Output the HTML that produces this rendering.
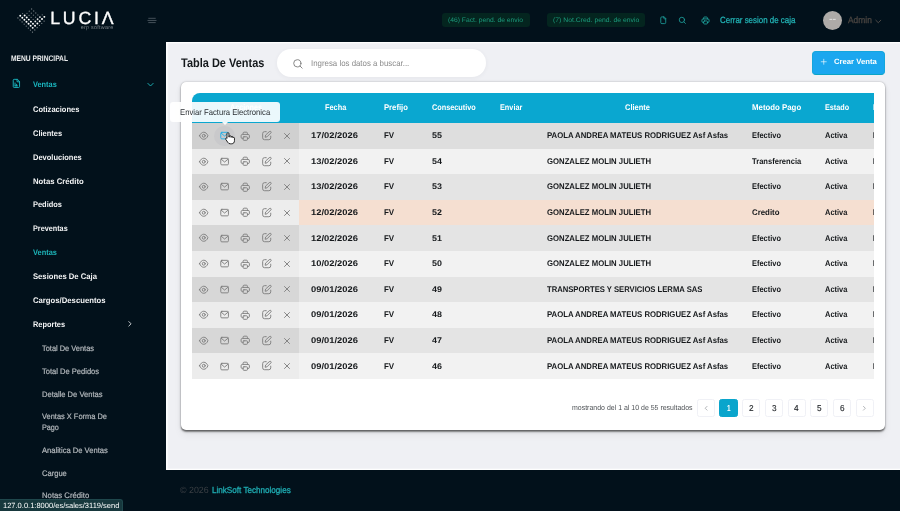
<!DOCTYPE html>
<html lang="es"><head><meta charset="utf-8"><title>Tabla De Ventas</title>
<style>
*{box-sizing:border-box;margin:0;padding:0}
html,body{width:900px;height:511px;overflow:hidden;background:#02111b;font-family:"Liberation Sans",sans-serif}
body{position:relative}
.t{position:absolute;white-space:nowrap;display:block;text-decoration:none;font-style:normal;transform-origin:0 50%;text-rendering:geometricPrecision}
.ic{position:absolute;display:block;overflow:visible}
ul,li{list-style:none}
aside,header,main,footer,.status{will-change:transform}
aside{position:absolute;left:0;top:0;width:166px;height:511px;background:#02111b;overflow:hidden}
header{position:absolute;left:166px;top:0;width:734px;height:42px;background:#02111b}
main{position:absolute;left:166px;top:41.6px;width:734px;height:428.1px;background:#eff0f4;box-shadow:inset 2.200px 0 1.200px -0.400px rgba(255,255,255,.9),inset 0 1.700px 0.800px -0.400px rgba(255,255,255,.95),inset 0 -1.700px 0.800px -0.400px rgba(255,255,255,.95)}
footer{position:absolute;left:166px;top:469.7px;width:734px;height:41.3px;background:#02111b}
.badge{position:absolute;background:#04251f;border-radius:3px}
.avatar{position:absolute;width:19.4px;height:19.4px;border-radius:50%;background:#aeaba8}
.search{position:absolute;background:#fff;border-radius:14px;box-shadow:0 1px 4px rgba(60,60,90,.06)}
.btn{position:absolute;display:block;background:#1ba7ef;border-radius:4px;border:1px solid #14a6dc;border-bottom:1.300px solid #0ba4c6}
.card{position:absolute;background:#fff;border-radius:5px;box-shadow:0 2px 1.700px rgba(0,0,0,.38),0 .500px 1.500px rgba(0,0,0,.30),0 1px 4px rgba(0,0,0,.10),0 5px 9px rgba(0,0,0,.05)}
table{position:absolute;display:block;overflow:hidden;background:#f4f1ef;border-top-left-radius:8px;border-collapse:collapse}
thead,tbody{display:block}
tr{display:block;position:absolute;left:0;width:800px}
th,td{display:block;position:absolute;top:0;font-weight:normal;text-align:left}
thead tr{background:#0aa7d0}
tr.odd td{background:#e4e4e4}
tr.odd td.act{background:#d7d7d7}
tr.hover td{background:#dedede}
tr.hover td.act{background:#d0d0d0}
tr.even td{background:#f2f2f2}
tr.even td.act{background:#ececec}
tr.warn td{background:#f5dfd1}
tr.warn td.act{background:#ededed}
td a{display:block}
.hov{position:absolute;display:block;width:20.5px;height:20.5px;border-radius:50%;background:#c9c9cb}
.pg{position:absolute;display:block;width:18.2px;height:18.4px;border-radius:2.500px;background:#fff;border:1px solid #f0f1f6}
.pg.on{background:#0aa5cc;border-color:#0aa5cc}
.tip{position:absolute;background:rgba(255,255,255,.92);border-radius:3px}
.arrow{position:absolute;display:block;width:0;height:0;border-left:3px solid transparent;border-right:3px solid transparent;border-top:3.200px solid rgba(255,255,255,.92)}
.status{position:absolute;left:0;top:498.8px;width:122.8px;height:12.2px;background:#17383d;border-top:1px solid #1f474c;border-right:1px solid #1f474c;border-top-right-radius:3px}
</style></head>
<body>
<aside>
<div class="brand">
<svg class="ic" style="left:0;top:0;width:60px;height:42px" viewBox="0 0 60 42" fill="#fff"><circle cx="17.93" cy="17.95" r="0.62" fill-opacity="0.55"/><circle cx="20.25" cy="15.75" r="0.98" fill-opacity="1.0"/><circle cx="22.57" cy="13.55" r="0.66" fill-opacity="0.42"/><circle cx="20.01" cy="19.97" r="0.62" fill-opacity="0.55"/><circle cx="22.33" cy="17.77" r="0.98" fill-opacity="1.0"/><circle cx="24.65" cy="15.57" r="0.98" fill-opacity="1.0"/><circle cx="26.97" cy="13.37" r="0.66" fill-opacity="0.42"/><circle cx="29.29" cy="11.17" r="0.66" fill-opacity="0.42"/><circle cx="31.61" cy="8.97" r="0.66" fill-opacity="0.42"/><circle cx="22.09" cy="21.99" r="0.62" fill-opacity="0.55"/><circle cx="24.41" cy="19.79" r="0.98" fill-opacity="1.0"/><circle cx="26.73" cy="17.59" r="0.98" fill-opacity="1.0"/><circle cx="29.05" cy="15.39" r="0.66" fill-opacity="0.42"/><circle cx="31.37" cy="13.19" r="0.66" fill-opacity="0.42"/><circle cx="33.69" cy="10.99" r="0.66" fill-opacity="0.42"/><circle cx="24.17" cy="24.01" r="0.62" fill-opacity="0.55"/><circle cx="26.49" cy="21.81" r="0.98" fill-opacity="1.0"/><circle cx="28.81" cy="19.61" r="0.98" fill-opacity="1.0"/><circle cx="31.13" cy="17.41" r="0.66" fill-opacity="0.42"/><circle cx="33.45" cy="15.21" r="0.66" fill-opacity="0.42"/><circle cx="35.77" cy="13.01" r="0.66" fill-opacity="0.42"/><circle cx="26.25" cy="26.03" r="0.62" fill-opacity="0.55"/><circle cx="28.57" cy="23.83" r="0.98" fill-opacity="1.0"/><circle cx="30.89" cy="21.63" r="0.98" fill-opacity="1.0"/><circle cx="33.21" cy="19.43" r="0.66" fill-opacity="0.42"/><circle cx="35.53" cy="17.23" r="0.66" fill-opacity="0.42"/><circle cx="37.85" cy="15.03" r="0.66" fill-opacity="0.42"/><circle cx="28.33" cy="28.05" r="0.62" fill-opacity="0.55"/><circle cx="30.65" cy="25.85" r="0.98" fill-opacity="1.0"/><circle cx="32.97" cy="23.65" r="0.98" fill-opacity="1.0"/><circle cx="35.29" cy="21.45" r="0.9" fill-opacity="0.88"/><circle cx="37.61" cy="19.25" r="0.9" fill-opacity="0.88"/><circle cx="39.93" cy="17.05" r="0.9" fill-opacity="0.88"/><circle cx="42.25" cy="14.85" r="0.66" fill-opacity="0.42"/><circle cx="30.41" cy="30.07" r="0.62" fill-opacity="0.55"/><circle cx="32.73" cy="27.87" r="0.98" fill-opacity="1.0"/><circle cx="35.05" cy="25.67" r="0.98" fill-opacity="1.0"/><circle cx="37.37" cy="23.47" r="0.98" fill-opacity="1.0"/><circle cx="39.69" cy="21.27" r="0.98" fill-opacity="1.0"/><circle cx="42.01" cy="19.07" r="0.98" fill-opacity="1.0"/><circle cx="44.33" cy="16.87" r="0.98" fill-opacity="1.0"/><circle cx="32.49" cy="32.09" r="0.62" fill-opacity="0.55"/><circle cx="34.81" cy="29.89" r="0.62" fill-opacity="0.55"/><circle cx="37.13" cy="27.69" r="0.62" fill-opacity="0.55"/><circle cx="39.45" cy="25.49" r="0.62" fill-opacity="0.55"/><circle cx="41.77" cy="23.29" r="0.62" fill-opacity="0.55"/><circle cx="44.09" cy="21.09" r="0.62" fill-opacity="0.55"/></svg>
<span class="t logo" style="left:50.20px;top:5.86px;font-size:17.7px;line-height:24.78px;font-weight:400;color:#fdfdfd;letter-spacing:2.819px;-webkit-text-stroke:0.35px #fdfdfd;">LUCI&Lambda;</span>
<span class="t" style="left:80.80px;top:25.42px;font-size:5.4px;line-height:7.56px;font-weight:400;color:#7a8187;letter-spacing:0.257px;">erp software</span>
<svg class="ic" style="left:146px;top:15px;width:12px;height:10px" viewBox="0 0 12 10" fill="none" stroke="#515c66" stroke-width="0.850" stroke-linecap="round"><path d="M2.700 3.300h6.600M1.900 5.450h8.200M2.700 7.600h6.600"/></svg>
<h6 class="t" style="left:11.40px;top:53.40px;font-size:8px;line-height:11.2px;font-weight:700;color:#eceeef;transform:scaleX(0.8346);">MENU PRINCIPAL</h6>
<svg class="ic" style="left:11.25px;top:78.00px;width:10.8px;height:10.8px;" viewBox="0 0 24 24" fill="none" stroke="#1bb6bf" stroke-width="2.1" stroke-linecap="round" stroke-linejoin="round"><path d="M13.500 3H7a2 2 0 0 0-2 2v14a2 2 0 0 0 2 2h10a2 2 0 0 0 2-2V8.500z"/><path d="M13.500 3v5.500H19"/><path d="M9 17.500v-6.500M9 17.500h5.500M12.500 17.500v-3.500"/></svg>
<a class="t" style="left:32.90px;top:78.88px;font-size:8.1px;line-height:11.34px;font-weight:700;color:#1bb6bf;transform:scaleX(0.9115);">Ventas</a>
<svg class="ic" style="left:146.20px;top:79.70px;width:9px;height:9px;" viewBox="0 0 24 24" fill="none" stroke="#1db3b7" stroke-width="2.5" stroke-linecap="round" stroke-linejoin="round"><path d="M5 9l7 7 7-7"/></svg>
<svg class="ic" style="left:125.60px;top:320.40px;width:7.6px;height:7.6px;" viewBox="0 0 24 24" fill="none" stroke="#e2e4e6" stroke-width="2.8" stroke-linecap="round" stroke-linejoin="round"><path d="M9 5l7 7-7 7"/></svg>
</div>
<nav><ul>
<li><a class="t" style="left:32.90px;top:104.13px;font-size:8.1px;line-height:11.34px;font-weight:700;color:#f3f4f5;transform:scaleX(0.9292);">Cotizaciones</a></li>
<li><a class="t" style="left:32.90px;top:127.96px;font-size:8.1px;line-height:11.34px;font-weight:700;color:#f3f4f5;transform:scaleX(0.9238);">Clientes</a></li>
<li><a class="t" style="left:32.90px;top:151.79px;font-size:8.1px;line-height:11.34px;font-weight:700;color:#f3f4f5;transform:scaleX(0.9270);">Devoluciones</a></li>
<li><a class="t" style="left:32.90px;top:175.62px;font-size:8.1px;line-height:11.34px;font-weight:700;color:#f3f4f5;transform:scaleX(0.9552);">Notas Cr&eacute;dito</a></li>
<li><a class="t" style="left:32.90px;top:199.45px;font-size:8.1px;line-height:11.34px;font-weight:700;color:#f3f4f5;transform:scaleX(0.9211);">Pedidos</a></li>
<li><a class="t" style="left:32.90px;top:223.28px;font-size:8.1px;line-height:11.34px;font-weight:700;color:#f3f4f5;transform:scaleX(0.8966);">Preventas</a></li>
<li><a class="t" style="left:32.90px;top:247.11px;font-size:8.1px;line-height:11.34px;font-weight:700;color:#1db3b7;transform:scaleX(0.9154);">Ventas</a></li>
<li><a class="t" style="left:32.90px;top:270.94px;font-size:8.1px;line-height:11.34px;font-weight:700;color:#f3f4f5;transform:scaleX(0.9469);">Sesiones De Caja</a></li>
<li><a class="t" style="left:32.90px;top:294.77px;font-size:8.1px;line-height:11.34px;font-weight:700;color:#f3f4f5;transform:scaleX(0.9538);">Cargos/Descuentos</a></li>
<li><a class="t" style="left:32.90px;top:318.60px;font-size:8.1px;line-height:11.34px;font-weight:700;color:#f3f4f5;transform:scaleX(0.9147);">Reportes</a></li>
<li><a class="t" style="left:42.10px;top:342.70px;font-size:8px;line-height:11.2px;font-weight:400;color:#b4b9bd;transform:scaleX(0.9278);-webkit-text-stroke:0.200px #b4b9bd;">Total De Ventas</a></li>
<li><a class="t" style="left:42.10px;top:365.70px;font-size:8px;line-height:11.2px;font-weight:400;color:#b4b9bd;transform:scaleX(0.9440);-webkit-text-stroke:0.200px #b4b9bd;">Total De Pedidos</a></li>
<li><a class="t" style="left:42.10px;top:388.90px;font-size:8px;line-height:11.2px;font-weight:400;color:#b4b9bd;transform:scaleX(0.9446);-webkit-text-stroke:0.200px #b4b9bd;">Detalle De Ventas</a></li>
<li><a class="t" style="left:42.10px;top:411.10px;font-size:8px;line-height:11.2px;font-weight:400;color:#b4b9bd;transform:scaleX(0.9296);-webkit-text-stroke:0.200px #b4b9bd;">Ventas X Forma De</a></li>
<li><a class="t" style="left:42.10px;top:422.00px;font-size:8px;line-height:11.2px;font-weight:400;color:#b4b9bd;transform:scaleX(0.9043);-webkit-text-stroke:0.200px #b4b9bd;">Pago</a></li>
<li><a class="t" style="left:42.10px;top:445.30px;font-size:8px;line-height:11.2px;font-weight:400;color:#b4b9bd;transform:scaleX(0.9485);-webkit-text-stroke:0.200px #b4b9bd;">Analitica De Ventas</a></li>
<li><a class="t" style="left:42.10px;top:468.30px;font-size:8px;line-height:11.2px;font-weight:400;color:#b4b9bd;transform:scaleX(0.9448);-webkit-text-stroke:0.200px #b4b9bd;">Cargue</a></li>
<li><a class="t" style="left:42.10px;top:490.20px;font-size:8px;line-height:11.2px;font-weight:400;color:#b4b9bd;transform:scaleX(0.9668);-webkit-text-stroke:0.200px #b4b9bd;">Notas Cr&eacute;dito</a></li>
</ul></nav>
</aside>
<header>
<div class="badge" style="left:276.3px;top:13.3px;width:87.4px;height:13.4px"></div>
<span class="t" style="left:282.40px;top:16.08px;font-size:6.6px;line-height:9.24px;font-weight:400;color:#1b9a7c;transform:scaleX(1.0217);">(46) Fact. pend. de envio</span>
<div class="badge" style="left:380.79999999999995px;top:13.3px;width:97.9px;height:13.4px"></div>
<span class="t" style="left:386.70px;top:16.08px;font-size:6.6px;line-height:9.24px;font-weight:400;color:#1b9a7c;transform:scaleX(1.0372);">(7) Not.Cred. pend. de envio</span>
<svg class="ic" style="left:493.05px;top:15.75px;width:8.5px;height:8.5px;" viewBox="0 0 24 24" fill="none" stroke="#1fa9a3" stroke-width="2.2" stroke-linecap="round" stroke-linejoin="round"><path d="M13.500 2.500H8a3 3 0 0 0-3 3v13a3 3 0 0 0 3 3h8a3 3 0 0 0 3-3V8z"/><path d="M13.500 2.500V6a2 2 0 0 0 2 2H19"/></svg>
<svg class="ic" style="left:512.05px;top:15.75px;width:8.5px;height:8.5px;" viewBox="0 0 24 24" fill="none" stroke="#1fa9a3" stroke-width="2.2" stroke-linecap="round" stroke-linejoin="round"><circle cx="11" cy="11" r="7.500"/><path d="M21 21l-4.300-4.300"/></svg>
<svg class="ic" style="left:535.00px;top:15.50px;width:9px;height:9px;" viewBox="0 0 24 24" fill="none" stroke="#1fa9a3" stroke-width="2.2" stroke-linecap="round" stroke-linejoin="round"><path d="M7 7.800V5.200a2.500 2.500 0 0 1 2.500-2.500h5a2.500 2.500 0 0 1 2.500 2.500v2.600"/><path d="M7 17.200H5.500a3 3 0 0 1-3-3v-3.400a3 3 0 0 1 3-3h13a3 3 0 0 1 3 3v3.400a3 3 0 0 1-3 3H17"/><rect x="7" y="13.200" width="10" height="8.100" rx="2"/></svg>
<a class="t" style="left:554.00px;top:14.20px;font-size:9px;line-height:12.6px;font-weight:400;color:#22b4b6;transform:scaleX(0.8802);-webkit-text-stroke:0.250px #22b4b6;">Cerrar sesion de caja</a>
<div class="avatar" style="left:656.70px;top:10.70px"></div>
<span class="t" style="left:662.90px;top:15.35px;font-size:6.5px;line-height:9.1px;font-weight:700;color:#ecebea;transform:scaleX(1.6576);">--</span>
<span class="t" style="left:682.20px;top:14.40px;font-size:9px;line-height:12.6px;font-weight:400;color:#4a4541;transform:scaleX(0.9328);-webkit-text-stroke:0.300px #4a4541;">Admin</span>
<svg class="ic" style="left:708.40px;top:16.60px;width:8.6px;height:8.6px;" viewBox="0 0 24 24" fill="none" stroke="#4f4b48" stroke-width="2.7" stroke-linecap="round" stroke-linejoin="round"><path d="M5 9l7 7 7-7"/></svg>
</header>
<main>
<h4 class="t" style="left:15.20px;top:13.12px;font-size:12.4px;line-height:17.36px;font-weight:700;color:#14181b;transform:scaleX(0.8861);">Tabla De Ventas</h4>
<div class="search" style="left:111.4px;top:7.0px;width:208.6px;height:27.5px"></div>
<svg class="ic" style="left:126.00px;top:15.80px;width:11.6px;height:11.6px;" viewBox="0 0 24 24" fill="none" stroke="#7d7d7d" stroke-width="1.9" stroke-linecap="round" stroke-linejoin="round"><circle cx="11" cy="11" r="7.500"/><path d="M21 21l-4.300-4.300"/></svg>
<span class="t" style="left:145.20px;top:16.02px;font-size:8.4px;line-height:11.76px;font-weight:400;color:#8b8b8b;transform:scaleX(0.9384);">Ingresa los datos a buscar...</span>
<a class="btn" style="left:645.5px;top:9.2px;width:73.7px;height:23.8px"></a>
<svg class="ic" style="left:654.25px;top:16.05px;width:7.5px;height:7.5px;" viewBox="0 0 24 24" fill="none" stroke="#ffffff" stroke-width="2" stroke-linecap="round" stroke-linejoin="round"><path d="M12 4v16M4 12h16"/></svg>
<span class="t" style="left:667.60px;top:14.98px;font-size:7.6px;line-height:10.64px;font-weight:700;color:#ffffff;transform:scaleX(1.0138);">Crear Venta</span>
<section class="card" style="left:15px;top:40.4px;width:703.7px;height:347.7px"><table style="left:11px;top:11px;width:682.3px;height:285.60px"><thead><tr style="top:0;height:29.20px"><th class="act" style="left:0;width:106.8px;height:29.7px"><span class="t" style="left:38.00px;top:8.76px;font-size:8.2px;line-height:11.48px;font-weight:700;color:#ffffff;transform:scaleX(0.8790);">Acciones</span></th><th style="left:106.8px;width:72.0px;height:29.7px"><span class="t" style="left:25.90px;top:8.76px;font-size:8.2px;line-height:11.48px;font-weight:700;color:#ffffff;transform:scaleX(0.8998);">Fecha</span></th><th style="left:178.8px;width:49.0px;height:29.7px"><span class="t" style="left:12.80px;top:8.76px;font-size:8.2px;line-height:11.48px;font-weight:700;color:#ffffff;transform:scaleX(0.9378);">Prefijo</span></th><th style="left:227.8px;width:67.8px;height:29.7px"><span class="t" style="left:11.90px;top:8.76px;font-size:8.2px;line-height:11.48px;font-weight:700;color:#ffffff;transform:scaleX(0.8913);">Consecutivo</span></th><th style="left:295.6px;width:46.6px;height:29.7px"><span class="t" style="left:12.10px;top:8.76px;font-size:8.2px;line-height:11.48px;font-weight:700;color:#ffffff;transform:scaleX(0.8909);">Enviar</span></th><th style="left:342.2px;width:206.0px;height:29.7px"><span class="t" style="left:90.70px;top:8.76px;font-size:8.2px;line-height:11.48px;font-weight:700;color:#ffffff;transform:scaleX(0.9117);">Cliente</span></th><th style="left:548.2px;width:73.0px;height:29.7px"><span class="t" style="left:11.60px;top:8.76px;font-size:8.2px;line-height:11.48px;font-weight:700;color:#ffffff;transform:scaleX(0.9571);">Metodo Pago</span></th><th style="left:621.2px;width:48.0px;height:29.7px"><span class="t" style="left:11.80px;top:8.76px;font-size:8.2px;line-height:11.48px;font-weight:700;color:#ffffff;transform:scaleX(0.8860);">Estado</span></th><th style="left:669.2px;width:68.8px;height:29.7px"><span class="t" style="left:12.00px;top:8.76px;font-size:8.2px;line-height:11.48px;font-weight:700;color:#ffffff;transform:scaleX(0.8790);">Electronica</span></th></tr></thead><tbody><tr class="odd hover" style="top:29.70px;height:25.59px"><td class="act" style="left:0;width:106.8px;height:25.59px"><a><svg class="ic" style="left:6.90px;top:7.99px;width:9.5px;height:9.5px;" viewBox="0 0 24 24" fill="none" stroke="#818181" stroke-width="2.4" stroke-linecap="round" stroke-linejoin="round"><path d="M1.5 12C4 6.200 7.500 3.100 12 3.100S20 6.200 22.500 12C20 17.800 16.500 20.900 12 20.900S4 17.800 1.500 12z"/><circle cx="12" cy="12" r="3.700"/></svg></a><i class="hov" style="left:22.25px;top:2.74px"></i><a><svg class="ic" style="left:27.90px;top:8.14px;width:9.2px;height:9.2px;" viewBox="0 0 24 24" fill="none" stroke="#25b0e6" stroke-width="2.48" stroke-linecap="round" stroke-linejoin="round"><rect x="2" y="3.500" width="20" height="17" rx="2.800"/><path d="M3.200 5.800l8.800 7.400 8.800-7.400"/></svg></a><a><svg class="ic" style="left:48.25px;top:7.49px;width:10.5px;height:10.5px;" viewBox="0 0 24 24" fill="none" stroke="#818181" stroke-width="2.17" stroke-linecap="round" stroke-linejoin="round"><path d="M7 7.800V5.200a2.500 2.500 0 0 1 2.500-2.500h5a2.500 2.500 0 0 1 2.500 2.500v2.600"/><path d="M7 17.200H5.500a3 3 0 0 1-3-3v-3.400a3 3 0 0 1 3-3h13a3 3 0 0 1 3 3v3.400a3 3 0 0 1-3 3H17"/><rect x="7" y="13.200" width="10" height="8.100" rx="2"/></svg></a><a><svg class="ic" style="left:68.60px;top:7.04px;width:11.4px;height:11.4px;" viewBox="0 0 24 24" fill="none" stroke="#818181" stroke-width="2.0" stroke-linecap="round" stroke-linejoin="round"><path d="M11 3.500H7.500a4 4 0 0 0-4 4v9a4 4 0 0 0 4 4h9a4 4 0 0 0 4-4V13"/><path d="M17.800 3.200a2.100 2.100 0 0 1 3 3L12.500 14.500l-3.800.8.800-3.800z"/></svg></a><a><svg class="ic" style="left:90.10px;top:7.74px;width:10.0px;height:10.0px;" viewBox="0 0 24 24" fill="none" stroke="#818181" stroke-width="2.28" stroke-linecap="round" stroke-linejoin="round"><path d="M6 6l12 12M18 6L6 18"/></svg></a></td><td style="left:106.8px;width:72.0px;height:25.59px"><span class="t" style="left:12.60px;top:7.11px;font-size:8.2px;line-height:11.48px;font-weight:700;color:#15181b;transform:scaleX(1.1443);">17/02/2026</span></td><td style="left:178.8px;width:49.0px;height:25.59px"><span class="t" style="left:12.80px;top:7.11px;font-size:8.2px;line-height:11.48px;font-weight:700;color:#15181b;transform:scaleX(0.9743);">FV</span></td><td style="left:227.8px;width:67.8px;height:25.59px"><span class="t" style="left:11.80px;top:7.11px;font-size:8.2px;line-height:11.48px;font-weight:700;color:#15181b;transform:scaleX(1.0868);">55</span></td><td style="left:295.6px;width:46.6px;height:25.59px"></td><td style="left:342.2px;width:206.0px;height:25.59px"><span class="t" style="left:12.40px;top:7.11px;font-size:8.2px;line-height:11.48px;font-weight:700;color:#15181b;transform:scaleX(0.9461);">PAOLA ANDREA MATEUS RODRIGUEZ Asf Asfas</span></td><td style="left:548.2px;width:73.0px;height:25.59px"><span class="t" style="left:11.60px;top:7.11px;font-size:8.2px;line-height:11.48px;font-weight:700;color:#15181b;transform:scaleX(0.9103);">Efectivo</span></td><td style="left:621.2px;width:48.0px;height:25.59px"><span class="t" style="left:11.80px;top:7.11px;font-size:8.2px;line-height:11.48px;font-weight:700;color:#15181b;transform:scaleX(0.9114);">Activa</span></td><td style="left:669.2px;width:68.8px;height:25.59px"><span class="t" style="left:12.20px;top:7.11px;font-size:8.2px;line-height:11.48px;font-weight:700;color:#15181b;transform:scaleX(0.6043);">No</span></td></tr><tr class="even" style="top:55.29px;height:25.59px"><td class="act" style="left:0;width:106.8px;height:25.59px"><a><svg class="ic" style="left:6.90px;top:7.99px;width:9.5px;height:9.5px;" viewBox="0 0 24 24" fill="none" stroke="#818181" stroke-width="2.4" stroke-linecap="round" stroke-linejoin="round"><path d="M1.5 12C4 6.200 7.500 3.100 12 3.100S20 6.200 22.500 12C20 17.800 16.500 20.900 12 20.900S4 17.800 1.500 12z"/><circle cx="12" cy="12" r="3.700"/></svg></a><a><svg class="ic" style="left:27.90px;top:8.14px;width:9.2px;height:9.2px;" viewBox="0 0 24 24" fill="none" stroke="#818181" stroke-width="2.48" stroke-linecap="round" stroke-linejoin="round"><rect x="2" y="3.500" width="20" height="17" rx="2.800"/><path d="M3.200 5.800l8.800 7.400 8.800-7.400"/></svg></a><a><svg class="ic" style="left:48.25px;top:7.49px;width:10.5px;height:10.5px;" viewBox="0 0 24 24" fill="none" stroke="#818181" stroke-width="2.17" stroke-linecap="round" stroke-linejoin="round"><path d="M7 7.800V5.200a2.500 2.500 0 0 1 2.500-2.500h5a2.500 2.500 0 0 1 2.500 2.500v2.600"/><path d="M7 17.200H5.500a3 3 0 0 1-3-3v-3.400a3 3 0 0 1 3-3h13a3 3 0 0 1 3 3v3.400a3 3 0 0 1-3 3H17"/><rect x="7" y="13.200" width="10" height="8.100" rx="2"/></svg></a><a><svg class="ic" style="left:68.60px;top:7.04px;width:11.4px;height:11.4px;" viewBox="0 0 24 24" fill="none" stroke="#818181" stroke-width="2.0" stroke-linecap="round" stroke-linejoin="round"><path d="M11 3.500H7.500a4 4 0 0 0-4 4v9a4 4 0 0 0 4 4h9a4 4 0 0 0 4-4V13"/><path d="M17.800 3.200a2.100 2.100 0 0 1 3 3L12.500 14.500l-3.800.8.800-3.800z"/></svg></a><a><svg class="ic" style="left:90.10px;top:7.74px;width:10.0px;height:10.0px;" viewBox="0 0 24 24" fill="none" stroke="#818181" stroke-width="2.28" stroke-linecap="round" stroke-linejoin="round"><path d="M6 6l12 12M18 6L6 18"/></svg></a></td><td style="left:106.8px;width:72.0px;height:25.59px"><span class="t" style="left:12.60px;top:7.10px;font-size:8.2px;line-height:11.48px;font-weight:700;color:#15181b;transform:scaleX(1.1443);">13/02/2026</span></td><td style="left:178.8px;width:49.0px;height:25.59px"><span class="t" style="left:12.80px;top:7.10px;font-size:8.2px;line-height:11.48px;font-weight:700;color:#15181b;transform:scaleX(0.9743);">FV</span></td><td style="left:227.8px;width:67.8px;height:25.59px"><span class="t" style="left:11.80px;top:7.10px;font-size:8.2px;line-height:11.48px;font-weight:700;color:#15181b;transform:scaleX(1.0868);">54</span></td><td style="left:295.6px;width:46.6px;height:25.59px"></td><td style="left:342.2px;width:206.0px;height:25.59px"><span class="t" style="left:12.40px;top:7.10px;font-size:8.2px;line-height:11.48px;font-weight:700;color:#15181b;transform:scaleX(0.9457);">GONZALEZ MOLIN JULIETH</span></td><td style="left:548.2px;width:73.0px;height:25.59px"><span class="t" style="left:11.60px;top:7.10px;font-size:8.2px;line-height:11.48px;font-weight:700;color:#15181b;transform:scaleX(0.9239);">Transferencia</span></td><td style="left:621.2px;width:48.0px;height:25.59px"><span class="t" style="left:11.80px;top:7.10px;font-size:8.2px;line-height:11.48px;font-weight:700;color:#15181b;transform:scaleX(0.9114);">Activa</span></td><td style="left:669.2px;width:68.8px;height:25.59px"><span class="t" style="left:12.20px;top:7.10px;font-size:8.2px;line-height:11.48px;font-weight:700;color:#15181b;transform:scaleX(0.6043);">No</span></td></tr><tr class="odd" style="top:80.88px;height:25.59px"><td class="act" style="left:0;width:106.8px;height:25.59px"><a><svg class="ic" style="left:6.90px;top:7.99px;width:9.5px;height:9.5px;" viewBox="0 0 24 24" fill="none" stroke="#818181" stroke-width="2.4" stroke-linecap="round" stroke-linejoin="round"><path d="M1.5 12C4 6.200 7.500 3.100 12 3.100S20 6.200 22.500 12C20 17.800 16.500 20.900 12 20.900S4 17.800 1.500 12z"/><circle cx="12" cy="12" r="3.700"/></svg></a><a><svg class="ic" style="left:27.90px;top:8.14px;width:9.2px;height:9.2px;" viewBox="0 0 24 24" fill="none" stroke="#818181" stroke-width="2.48" stroke-linecap="round" stroke-linejoin="round"><rect x="2" y="3.500" width="20" height="17" rx="2.800"/><path d="M3.200 5.800l8.800 7.400 8.800-7.400"/></svg></a><a><svg class="ic" style="left:48.25px;top:7.49px;width:10.5px;height:10.5px;" viewBox="0 0 24 24" fill="none" stroke="#818181" stroke-width="2.17" stroke-linecap="round" stroke-linejoin="round"><path d="M7 7.800V5.200a2.500 2.500 0 0 1 2.500-2.500h5a2.500 2.500 0 0 1 2.500 2.500v2.600"/><path d="M7 17.200H5.500a3 3 0 0 1-3-3v-3.400a3 3 0 0 1 3-3h13a3 3 0 0 1 3 3v3.400a3 3 0 0 1-3 3H17"/><rect x="7" y="13.200" width="10" height="8.100" rx="2"/></svg></a><a><svg class="ic" style="left:68.60px;top:7.04px;width:11.4px;height:11.4px;" viewBox="0 0 24 24" fill="none" stroke="#818181" stroke-width="2.0" stroke-linecap="round" stroke-linejoin="round"><path d="M11 3.500H7.500a4 4 0 0 0-4 4v9a4 4 0 0 0 4 4h9a4 4 0 0 0 4-4V13"/><path d="M17.800 3.200a2.100 2.100 0 0 1 3 3L12.500 14.500l-3.800.8.800-3.800z"/></svg></a><a><svg class="ic" style="left:90.10px;top:7.74px;width:10.0px;height:10.0px;" viewBox="0 0 24 24" fill="none" stroke="#818181" stroke-width="2.28" stroke-linecap="round" stroke-linejoin="round"><path d="M6 6l12 12M18 6L6 18"/></svg></a></td><td style="left:106.8px;width:72.0px;height:25.59px"><span class="t" style="left:12.60px;top:7.10px;font-size:8.2px;line-height:11.48px;font-weight:700;color:#15181b;transform:scaleX(1.1443);">13/02/2026</span></td><td style="left:178.8px;width:49.0px;height:25.59px"><span class="t" style="left:12.80px;top:7.10px;font-size:8.2px;line-height:11.48px;font-weight:700;color:#15181b;transform:scaleX(0.9743);">FV</span></td><td style="left:227.8px;width:67.8px;height:25.59px"><span class="t" style="left:11.80px;top:7.10px;font-size:8.2px;line-height:11.48px;font-weight:700;color:#15181b;transform:scaleX(1.0868);">53</span></td><td style="left:295.6px;width:46.6px;height:25.59px"></td><td style="left:342.2px;width:206.0px;height:25.59px"><span class="t" style="left:12.40px;top:7.10px;font-size:8.2px;line-height:11.48px;font-weight:700;color:#15181b;transform:scaleX(0.9457);">GONZALEZ MOLIN JULIETH</span></td><td style="left:548.2px;width:73.0px;height:25.59px"><span class="t" style="left:11.60px;top:7.10px;font-size:8.2px;line-height:11.48px;font-weight:700;color:#15181b;transform:scaleX(0.9103);">Efectivo</span></td><td style="left:621.2px;width:48.0px;height:25.59px"><span class="t" style="left:11.80px;top:7.10px;font-size:8.2px;line-height:11.48px;font-weight:700;color:#15181b;transform:scaleX(0.9114);">Activa</span></td><td style="left:669.2px;width:68.8px;height:25.59px"><span class="t" style="left:12.20px;top:7.10px;font-size:8.2px;line-height:11.48px;font-weight:700;color:#15181b;transform:scaleX(0.6043);">No</span></td></tr><tr class="even warn" style="top:106.47px;height:25.59px"><td class="act" style="left:0;width:106.8px;height:25.59px"><a><svg class="ic" style="left:6.90px;top:7.99px;width:9.5px;height:9.5px;" viewBox="0 0 24 24" fill="none" stroke="#818181" stroke-width="2.4" stroke-linecap="round" stroke-linejoin="round"><path d="M1.5 12C4 6.200 7.500 3.100 12 3.100S20 6.200 22.500 12C20 17.800 16.500 20.900 12 20.900S4 17.800 1.500 12z"/><circle cx="12" cy="12" r="3.700"/></svg></a><a><svg class="ic" style="left:27.90px;top:8.14px;width:9.2px;height:9.2px;" viewBox="0 0 24 24" fill="none" stroke="#818181" stroke-width="2.48" stroke-linecap="round" stroke-linejoin="round"><rect x="2" y="3.500" width="20" height="17" rx="2.800"/><path d="M3.200 5.800l8.800 7.400 8.800-7.400"/></svg></a><a><svg class="ic" style="left:48.25px;top:7.49px;width:10.5px;height:10.5px;" viewBox="0 0 24 24" fill="none" stroke="#818181" stroke-width="2.17" stroke-linecap="round" stroke-linejoin="round"><path d="M7 7.800V5.200a2.500 2.500 0 0 1 2.500-2.500h5a2.500 2.500 0 0 1 2.500 2.500v2.600"/><path d="M7 17.200H5.500a3 3 0 0 1-3-3v-3.400a3 3 0 0 1 3-3h13a3 3 0 0 1 3 3v3.400a3 3 0 0 1-3 3H17"/><rect x="7" y="13.200" width="10" height="8.100" rx="2"/></svg></a><a><svg class="ic" style="left:68.60px;top:7.04px;width:11.4px;height:11.4px;" viewBox="0 0 24 24" fill="none" stroke="#818181" stroke-width="2.0" stroke-linecap="round" stroke-linejoin="round"><path d="M11 3.500H7.500a4 4 0 0 0-4 4v9a4 4 0 0 0 4 4h9a4 4 0 0 0 4-4V13"/><path d="M17.800 3.200a2.100 2.100 0 0 1 3 3L12.500 14.500l-3.800.8.800-3.800z"/></svg></a><a><svg class="ic" style="left:90.10px;top:7.74px;width:10.0px;height:10.0px;" viewBox="0 0 24 24" fill="none" stroke="#818181" stroke-width="2.28" stroke-linecap="round" stroke-linejoin="round"><path d="M6 6l12 12M18 6L6 18"/></svg></a></td><td style="left:106.8px;width:72.0px;height:25.59px"><span class="t" style="left:12.60px;top:7.10px;font-size:8.2px;line-height:11.48px;font-weight:700;color:#15181b;transform:scaleX(1.1443);">12/02/2026</span></td><td style="left:178.8px;width:49.0px;height:25.59px"><span class="t" style="left:12.80px;top:7.10px;font-size:8.2px;line-height:11.48px;font-weight:700;color:#15181b;transform:scaleX(0.9743);">FV</span></td><td style="left:227.8px;width:67.8px;height:25.59px"><span class="t" style="left:11.80px;top:7.10px;font-size:8.2px;line-height:11.48px;font-weight:700;color:#15181b;transform:scaleX(1.0868);">52</span></td><td style="left:295.6px;width:46.6px;height:25.59px"></td><td style="left:342.2px;width:206.0px;height:25.59px"><span class="t" style="left:12.40px;top:7.10px;font-size:8.2px;line-height:11.48px;font-weight:700;color:#15181b;transform:scaleX(0.9457);">GONZALEZ MOLIN JULIETH</span></td><td style="left:548.2px;width:73.0px;height:25.59px"><span class="t" style="left:11.60px;top:7.10px;font-size:8.2px;line-height:11.48px;font-weight:700;color:#15181b;transform:scaleX(0.9597);">Credito</span></td><td style="left:621.2px;width:48.0px;height:25.59px"><span class="t" style="left:11.80px;top:7.10px;font-size:8.2px;line-height:11.48px;font-weight:700;color:#15181b;transform:scaleX(0.9114);">Activa</span></td><td style="left:669.2px;width:68.8px;height:25.59px"><span class="t" style="left:12.20px;top:7.10px;font-size:8.2px;line-height:11.48px;font-weight:700;color:#15181b;transform:scaleX(0.6043);">No</span></td></tr><tr class="odd" style="top:132.06px;height:25.59px"><td class="act" style="left:0;width:106.8px;height:25.59px"><a><svg class="ic" style="left:6.90px;top:7.99px;width:9.5px;height:9.5px;" viewBox="0 0 24 24" fill="none" stroke="#818181" stroke-width="2.4" stroke-linecap="round" stroke-linejoin="round"><path d="M1.5 12C4 6.200 7.500 3.100 12 3.100S20 6.200 22.500 12C20 17.800 16.500 20.900 12 20.900S4 17.800 1.500 12z"/><circle cx="12" cy="12" r="3.700"/></svg></a><a><svg class="ic" style="left:27.90px;top:8.14px;width:9.2px;height:9.2px;" viewBox="0 0 24 24" fill="none" stroke="#818181" stroke-width="2.48" stroke-linecap="round" stroke-linejoin="round"><rect x="2" y="3.500" width="20" height="17" rx="2.800"/><path d="M3.200 5.800l8.800 7.400 8.800-7.400"/></svg></a><a><svg class="ic" style="left:48.25px;top:7.49px;width:10.5px;height:10.5px;" viewBox="0 0 24 24" fill="none" stroke="#818181" stroke-width="2.17" stroke-linecap="round" stroke-linejoin="round"><path d="M7 7.800V5.200a2.500 2.500 0 0 1 2.500-2.500h5a2.500 2.500 0 0 1 2.500 2.500v2.600"/><path d="M7 17.200H5.500a3 3 0 0 1-3-3v-3.400a3 3 0 0 1 3-3h13a3 3 0 0 1 3 3v3.400a3 3 0 0 1-3 3H17"/><rect x="7" y="13.200" width="10" height="8.100" rx="2"/></svg></a><a><svg class="ic" style="left:68.60px;top:7.04px;width:11.4px;height:11.4px;" viewBox="0 0 24 24" fill="none" stroke="#818181" stroke-width="2.0" stroke-linecap="round" stroke-linejoin="round"><path d="M11 3.500H7.500a4 4 0 0 0-4 4v9a4 4 0 0 0 4 4h9a4 4 0 0 0 4-4V13"/><path d="M17.800 3.200a2.100 2.100 0 0 1 3 3L12.500 14.500l-3.800.8.800-3.800z"/></svg></a><a><svg class="ic" style="left:90.10px;top:7.74px;width:10.0px;height:10.0px;" viewBox="0 0 24 24" fill="none" stroke="#818181" stroke-width="2.28" stroke-linecap="round" stroke-linejoin="round"><path d="M6 6l12 12M18 6L6 18"/></svg></a></td><td style="left:106.8px;width:72.0px;height:25.59px"><span class="t" style="left:12.60px;top:7.10px;font-size:8.2px;line-height:11.48px;font-weight:700;color:#15181b;transform:scaleX(1.1443);">12/02/2026</span></td><td style="left:178.8px;width:49.0px;height:25.59px"><span class="t" style="left:12.80px;top:7.10px;font-size:8.2px;line-height:11.48px;font-weight:700;color:#15181b;transform:scaleX(0.9743);">FV</span></td><td style="left:227.8px;width:67.8px;height:25.59px"><span class="t" style="left:11.80px;top:7.10px;font-size:8.2px;line-height:11.48px;font-weight:700;color:#15181b;transform:scaleX(1.0868);">51</span></td><td style="left:295.6px;width:46.6px;height:25.59px"></td><td style="left:342.2px;width:206.0px;height:25.59px"><span class="t" style="left:12.40px;top:7.10px;font-size:8.2px;line-height:11.48px;font-weight:700;color:#15181b;transform:scaleX(0.9457);">GONZALEZ MOLIN JULIETH</span></td><td style="left:548.2px;width:73.0px;height:25.59px"><span class="t" style="left:11.60px;top:7.10px;font-size:8.2px;line-height:11.48px;font-weight:700;color:#15181b;transform:scaleX(0.9103);">Efectivo</span></td><td style="left:621.2px;width:48.0px;height:25.59px"><span class="t" style="left:11.80px;top:7.10px;font-size:8.2px;line-height:11.48px;font-weight:700;color:#15181b;transform:scaleX(0.9114);">Activa</span></td><td style="left:669.2px;width:68.8px;height:25.59px"><span class="t" style="left:12.20px;top:7.10px;font-size:8.2px;line-height:11.48px;font-weight:700;color:#15181b;transform:scaleX(0.6043);">No</span></td></tr><tr class="even" style="top:157.65px;height:25.59px"><td class="act" style="left:0;width:106.8px;height:25.59px"><a><svg class="ic" style="left:6.90px;top:7.99px;width:9.5px;height:9.5px;" viewBox="0 0 24 24" fill="none" stroke="#818181" stroke-width="2.4" stroke-linecap="round" stroke-linejoin="round"><path d="M1.5 12C4 6.200 7.500 3.100 12 3.100S20 6.200 22.500 12C20 17.800 16.500 20.900 12 20.900S4 17.800 1.500 12z"/><circle cx="12" cy="12" r="3.700"/></svg></a><a><svg class="ic" style="left:27.90px;top:8.14px;width:9.2px;height:9.2px;" viewBox="0 0 24 24" fill="none" stroke="#818181" stroke-width="2.48" stroke-linecap="round" stroke-linejoin="round"><rect x="2" y="3.500" width="20" height="17" rx="2.800"/><path d="M3.200 5.800l8.800 7.400 8.800-7.400"/></svg></a><a><svg class="ic" style="left:48.25px;top:7.49px;width:10.5px;height:10.5px;" viewBox="0 0 24 24" fill="none" stroke="#818181" stroke-width="2.17" stroke-linecap="round" stroke-linejoin="round"><path d="M7 7.800V5.200a2.500 2.500 0 0 1 2.500-2.500h5a2.500 2.500 0 0 1 2.500 2.500v2.600"/><path d="M7 17.200H5.500a3 3 0 0 1-3-3v-3.400a3 3 0 0 1 3-3h13a3 3 0 0 1 3 3v3.400a3 3 0 0 1-3 3H17"/><rect x="7" y="13.200" width="10" height="8.100" rx="2"/></svg></a><a><svg class="ic" style="left:68.60px;top:7.04px;width:11.4px;height:11.4px;" viewBox="0 0 24 24" fill="none" stroke="#818181" stroke-width="2.0" stroke-linecap="round" stroke-linejoin="round"><path d="M11 3.500H7.500a4 4 0 0 0-4 4v9a4 4 0 0 0 4 4h9a4 4 0 0 0 4-4V13"/><path d="M17.800 3.200a2.100 2.100 0 0 1 3 3L12.500 14.500l-3.800.8.800-3.800z"/></svg></a><a><svg class="ic" style="left:90.10px;top:7.74px;width:10.0px;height:10.0px;" viewBox="0 0 24 24" fill="none" stroke="#818181" stroke-width="2.28" stroke-linecap="round" stroke-linejoin="round"><path d="M6 6l12 12M18 6L6 18"/></svg></a></td><td style="left:106.8px;width:72.0px;height:25.59px"><span class="t" style="left:12.60px;top:7.10px;font-size:8.2px;line-height:11.48px;font-weight:700;color:#15181b;transform:scaleX(1.1443);">10/02/2026</span></td><td style="left:178.8px;width:49.0px;height:25.59px"><span class="t" style="left:12.80px;top:7.10px;font-size:8.2px;line-height:11.48px;font-weight:700;color:#15181b;transform:scaleX(0.9743);">FV</span></td><td style="left:227.8px;width:67.8px;height:25.59px"><span class="t" style="left:11.80px;top:7.10px;font-size:8.2px;line-height:11.48px;font-weight:700;color:#15181b;transform:scaleX(1.0868);">50</span></td><td style="left:295.6px;width:46.6px;height:25.59px"></td><td style="left:342.2px;width:206.0px;height:25.59px"><span class="t" style="left:12.40px;top:7.10px;font-size:8.2px;line-height:11.48px;font-weight:700;color:#15181b;transform:scaleX(0.9457);">GONZALEZ MOLIN JULIETH</span></td><td style="left:548.2px;width:73.0px;height:25.59px"><span class="t" style="left:11.60px;top:7.10px;font-size:8.2px;line-height:11.48px;font-weight:700;color:#15181b;transform:scaleX(0.9103);">Efectivo</span></td><td style="left:621.2px;width:48.0px;height:25.59px"><span class="t" style="left:11.80px;top:7.10px;font-size:8.2px;line-height:11.48px;font-weight:700;color:#15181b;transform:scaleX(0.9114);">Activa</span></td><td style="left:669.2px;width:68.8px;height:25.59px"><span class="t" style="left:12.20px;top:7.10px;font-size:8.2px;line-height:11.48px;font-weight:700;color:#15181b;transform:scaleX(0.6043);">No</span></td></tr><tr class="odd" style="top:183.24px;height:25.59px"><td class="act" style="left:0;width:106.8px;height:25.59px"><a><svg class="ic" style="left:6.90px;top:8.00px;width:9.5px;height:9.5px;" viewBox="0 0 24 24" fill="none" stroke="#818181" stroke-width="2.4" stroke-linecap="round" stroke-linejoin="round"><path d="M1.5 12C4 6.200 7.500 3.100 12 3.100S20 6.200 22.500 12C20 17.800 16.500 20.900 12 20.900S4 17.800 1.500 12z"/><circle cx="12" cy="12" r="3.700"/></svg></a><a><svg class="ic" style="left:27.90px;top:8.15px;width:9.2px;height:9.2px;" viewBox="0 0 24 24" fill="none" stroke="#818181" stroke-width="2.48" stroke-linecap="round" stroke-linejoin="round"><rect x="2" y="3.500" width="20" height="17" rx="2.800"/><path d="M3.200 5.800l8.800 7.400 8.800-7.400"/></svg></a><a><svg class="ic" style="left:48.25px;top:7.50px;width:10.5px;height:10.5px;" viewBox="0 0 24 24" fill="none" stroke="#818181" stroke-width="2.17" stroke-linecap="round" stroke-linejoin="round"><path d="M7 7.800V5.200a2.500 2.500 0 0 1 2.500-2.500h5a2.500 2.500 0 0 1 2.500 2.500v2.600"/><path d="M7 17.200H5.500a3 3 0 0 1-3-3v-3.400a3 3 0 0 1 3-3h13a3 3 0 0 1 3 3v3.400a3 3 0 0 1-3 3H17"/><rect x="7" y="13.200" width="10" height="8.100" rx="2"/></svg></a><a><svg class="ic" style="left:68.60px;top:7.05px;width:11.4px;height:11.4px;" viewBox="0 0 24 24" fill="none" stroke="#818181" stroke-width="2.0" stroke-linecap="round" stroke-linejoin="round"><path d="M11 3.500H7.500a4 4 0 0 0-4 4v9a4 4 0 0 0 4 4h9a4 4 0 0 0 4-4V13"/><path d="M17.800 3.200a2.100 2.100 0 0 1 3 3L12.500 14.500l-3.800.8.800-3.800z"/></svg></a><a><svg class="ic" style="left:90.10px;top:7.75px;width:10.0px;height:10.0px;" viewBox="0 0 24 24" fill="none" stroke="#818181" stroke-width="2.28" stroke-linecap="round" stroke-linejoin="round"><path d="M6 6l12 12M18 6L6 18"/></svg></a></td><td style="left:106.8px;width:72.0px;height:25.59px"><span class="t" style="left:12.60px;top:7.11px;font-size:8.2px;line-height:11.48px;font-weight:700;color:#15181b;transform:scaleX(1.1443);">09/01/2026</span></td><td style="left:178.8px;width:49.0px;height:25.59px"><span class="t" style="left:12.80px;top:7.11px;font-size:8.2px;line-height:11.48px;font-weight:700;color:#15181b;transform:scaleX(0.9743);">FV</span></td><td style="left:227.8px;width:67.8px;height:25.59px"><span class="t" style="left:11.80px;top:7.11px;font-size:8.2px;line-height:11.48px;font-weight:700;color:#15181b;transform:scaleX(1.0868);">49</span></td><td style="left:295.6px;width:46.6px;height:25.59px"></td><td style="left:342.2px;width:206.0px;height:25.59px"><span class="t" style="left:12.40px;top:7.11px;font-size:8.2px;line-height:11.48px;font-weight:700;color:#15181b;transform:scaleX(0.9349);">TRANSPORTES Y SERVICIOS LERMA SAS</span></td><td style="left:548.2px;width:73.0px;height:25.59px"><span class="t" style="left:11.60px;top:7.11px;font-size:8.2px;line-height:11.48px;font-weight:700;color:#15181b;transform:scaleX(0.9103);">Efectivo</span></td><td style="left:621.2px;width:48.0px;height:25.59px"><span class="t" style="left:11.80px;top:7.11px;font-size:8.2px;line-height:11.48px;font-weight:700;color:#15181b;transform:scaleX(0.9114);">Activa</span></td><td style="left:669.2px;width:68.8px;height:25.59px"><span class="t" style="left:12.20px;top:7.11px;font-size:8.2px;line-height:11.48px;font-weight:700;color:#15181b;transform:scaleX(0.6043);">No</span></td></tr><tr class="even" style="top:208.83px;height:25.59px"><td class="act" style="left:0;width:106.8px;height:25.59px"><a><svg class="ic" style="left:6.90px;top:8.00px;width:9.5px;height:9.5px;" viewBox="0 0 24 24" fill="none" stroke="#818181" stroke-width="2.4" stroke-linecap="round" stroke-linejoin="round"><path d="M1.5 12C4 6.200 7.500 3.100 12 3.100S20 6.200 22.500 12C20 17.800 16.500 20.900 12 20.900S4 17.800 1.500 12z"/><circle cx="12" cy="12" r="3.700"/></svg></a><a><svg class="ic" style="left:27.90px;top:8.15px;width:9.2px;height:9.2px;" viewBox="0 0 24 24" fill="none" stroke="#818181" stroke-width="2.48" stroke-linecap="round" stroke-linejoin="round"><rect x="2" y="3.500" width="20" height="17" rx="2.800"/><path d="M3.200 5.800l8.800 7.400 8.800-7.400"/></svg></a><a><svg class="ic" style="left:48.25px;top:7.50px;width:10.5px;height:10.5px;" viewBox="0 0 24 24" fill="none" stroke="#818181" stroke-width="2.17" stroke-linecap="round" stroke-linejoin="round"><path d="M7 7.800V5.200a2.500 2.500 0 0 1 2.500-2.500h5a2.500 2.500 0 0 1 2.500 2.500v2.600"/><path d="M7 17.200H5.500a3 3 0 0 1-3-3v-3.400a3 3 0 0 1 3-3h13a3 3 0 0 1 3 3v3.400a3 3 0 0 1-3 3H17"/><rect x="7" y="13.200" width="10" height="8.100" rx="2"/></svg></a><a><svg class="ic" style="left:68.60px;top:7.05px;width:11.4px;height:11.4px;" viewBox="0 0 24 24" fill="none" stroke="#818181" stroke-width="2.0" stroke-linecap="round" stroke-linejoin="round"><path d="M11 3.500H7.500a4 4 0 0 0-4 4v9a4 4 0 0 0 4 4h9a4 4 0 0 0 4-4V13"/><path d="M17.800 3.200a2.100 2.100 0 0 1 3 3L12.500 14.500l-3.800.8.800-3.800z"/></svg></a><a><svg class="ic" style="left:90.10px;top:7.75px;width:10.0px;height:10.0px;" viewBox="0 0 24 24" fill="none" stroke="#818181" stroke-width="2.28" stroke-linecap="round" stroke-linejoin="round"><path d="M6 6l12 12M18 6L6 18"/></svg></a></td><td style="left:106.8px;width:72.0px;height:25.59px"><span class="t" style="left:12.60px;top:7.11px;font-size:8.2px;line-height:11.48px;font-weight:700;color:#15181b;transform:scaleX(1.1443);">09/01/2026</span></td><td style="left:178.8px;width:49.0px;height:25.59px"><span class="t" style="left:12.80px;top:7.11px;font-size:8.2px;line-height:11.48px;font-weight:700;color:#15181b;transform:scaleX(0.9743);">FV</span></td><td style="left:227.8px;width:67.8px;height:25.59px"><span class="t" style="left:11.80px;top:7.11px;font-size:8.2px;line-height:11.48px;font-weight:700;color:#15181b;transform:scaleX(1.0868);">48</span></td><td style="left:295.6px;width:46.6px;height:25.59px"></td><td style="left:342.2px;width:206.0px;height:25.59px"><span class="t" style="left:12.40px;top:7.11px;font-size:8.2px;line-height:11.48px;font-weight:700;color:#15181b;transform:scaleX(0.9461);">PAOLA ANDREA MATEUS RODRIGUEZ Asf Asfas</span></td><td style="left:548.2px;width:73.0px;height:25.59px"><span class="t" style="left:11.60px;top:7.11px;font-size:8.2px;line-height:11.48px;font-weight:700;color:#15181b;transform:scaleX(0.9103);">Efectivo</span></td><td style="left:621.2px;width:48.0px;height:25.59px"><span class="t" style="left:11.80px;top:7.11px;font-size:8.2px;line-height:11.48px;font-weight:700;color:#15181b;transform:scaleX(0.9114);">Activa</span></td><td style="left:669.2px;width:68.8px;height:25.59px"><span class="t" style="left:12.20px;top:7.11px;font-size:8.2px;line-height:11.48px;font-weight:700;color:#15181b;transform:scaleX(0.6043);">No</span></td></tr><tr class="odd" style="top:234.42px;height:25.59px"><td class="act" style="left:0;width:106.8px;height:25.59px"><a><svg class="ic" style="left:6.90px;top:8.00px;width:9.5px;height:9.5px;" viewBox="0 0 24 24" fill="none" stroke="#818181" stroke-width="2.4" stroke-linecap="round" stroke-linejoin="round"><path d="M1.5 12C4 6.200 7.500 3.100 12 3.100S20 6.200 22.500 12C20 17.800 16.500 20.900 12 20.900S4 17.800 1.500 12z"/><circle cx="12" cy="12" r="3.700"/></svg></a><a><svg class="ic" style="left:27.90px;top:8.15px;width:9.2px;height:9.2px;" viewBox="0 0 24 24" fill="none" stroke="#818181" stroke-width="2.48" stroke-linecap="round" stroke-linejoin="round"><rect x="2" y="3.500" width="20" height="17" rx="2.800"/><path d="M3.200 5.800l8.800 7.400 8.800-7.400"/></svg></a><a><svg class="ic" style="left:48.25px;top:7.50px;width:10.5px;height:10.5px;" viewBox="0 0 24 24" fill="none" stroke="#818181" stroke-width="2.17" stroke-linecap="round" stroke-linejoin="round"><path d="M7 7.800V5.200a2.500 2.500 0 0 1 2.500-2.500h5a2.500 2.500 0 0 1 2.500 2.500v2.600"/><path d="M7 17.200H5.500a3 3 0 0 1-3-3v-3.400a3 3 0 0 1 3-3h13a3 3 0 0 1 3 3v3.400a3 3 0 0 1-3 3H17"/><rect x="7" y="13.200" width="10" height="8.100" rx="2"/></svg></a><a><svg class="ic" style="left:68.60px;top:7.05px;width:11.4px;height:11.4px;" viewBox="0 0 24 24" fill="none" stroke="#818181" stroke-width="2.0" stroke-linecap="round" stroke-linejoin="round"><path d="M11 3.500H7.500a4 4 0 0 0-4 4v9a4 4 0 0 0 4 4h9a4 4 0 0 0 4-4V13"/><path d="M17.800 3.200a2.100 2.100 0 0 1 3 3L12.500 14.500l-3.800.8.800-3.800z"/></svg></a><a><svg class="ic" style="left:90.10px;top:7.75px;width:10.0px;height:10.0px;" viewBox="0 0 24 24" fill="none" stroke="#818181" stroke-width="2.28" stroke-linecap="round" stroke-linejoin="round"><path d="M6 6l12 12M18 6L6 18"/></svg></a></td><td style="left:106.8px;width:72.0px;height:25.59px"><span class="t" style="left:12.60px;top:7.11px;font-size:8.2px;line-height:11.48px;font-weight:700;color:#15181b;transform:scaleX(1.1443);">09/01/2026</span></td><td style="left:178.8px;width:49.0px;height:25.59px"><span class="t" style="left:12.80px;top:7.11px;font-size:8.2px;line-height:11.48px;font-weight:700;color:#15181b;transform:scaleX(0.9743);">FV</span></td><td style="left:227.8px;width:67.8px;height:25.59px"><span class="t" style="left:11.80px;top:7.11px;font-size:8.2px;line-height:11.48px;font-weight:700;color:#15181b;transform:scaleX(1.0868);">47</span></td><td style="left:295.6px;width:46.6px;height:25.59px"></td><td style="left:342.2px;width:206.0px;height:25.59px"><span class="t" style="left:12.40px;top:7.11px;font-size:8.2px;line-height:11.48px;font-weight:700;color:#15181b;transform:scaleX(0.9461);">PAOLA ANDREA MATEUS RODRIGUEZ Asf Asfas</span></td><td style="left:548.2px;width:73.0px;height:25.59px"><span class="t" style="left:11.60px;top:7.11px;font-size:8.2px;line-height:11.48px;font-weight:700;color:#15181b;transform:scaleX(0.9103);">Efectivo</span></td><td style="left:621.2px;width:48.0px;height:25.59px"><span class="t" style="left:11.80px;top:7.11px;font-size:8.2px;line-height:11.48px;font-weight:700;color:#15181b;transform:scaleX(0.9114);">Activa</span></td><td style="left:669.2px;width:68.8px;height:25.59px"><span class="t" style="left:12.20px;top:7.11px;font-size:8.2px;line-height:11.48px;font-weight:700;color:#15181b;transform:scaleX(0.6043);">No</span></td></tr><tr class="even" style="top:260.01px;height:25.59px"><td class="act" style="left:0;width:106.8px;height:25.59px"><a><svg class="ic" style="left:6.90px;top:8.00px;width:9.5px;height:9.5px;" viewBox="0 0 24 24" fill="none" stroke="#818181" stroke-width="2.4" stroke-linecap="round" stroke-linejoin="round"><path d="M1.5 12C4 6.200 7.500 3.100 12 3.100S20 6.200 22.500 12C20 17.800 16.500 20.900 12 20.900S4 17.800 1.500 12z"/><circle cx="12" cy="12" r="3.700"/></svg></a><a><svg class="ic" style="left:27.90px;top:8.15px;width:9.2px;height:9.2px;" viewBox="0 0 24 24" fill="none" stroke="#818181" stroke-width="2.48" stroke-linecap="round" stroke-linejoin="round"><rect x="2" y="3.500" width="20" height="17" rx="2.800"/><path d="M3.200 5.800l8.800 7.400 8.800-7.400"/></svg></a><a><svg class="ic" style="left:48.25px;top:7.50px;width:10.5px;height:10.5px;" viewBox="0 0 24 24" fill="none" stroke="#818181" stroke-width="2.17" stroke-linecap="round" stroke-linejoin="round"><path d="M7 7.800V5.200a2.500 2.500 0 0 1 2.500-2.500h5a2.500 2.500 0 0 1 2.500 2.500v2.600"/><path d="M7 17.200H5.500a3 3 0 0 1-3-3v-3.400a3 3 0 0 1 3-3h13a3 3 0 0 1 3 3v3.400a3 3 0 0 1-3 3H17"/><rect x="7" y="13.200" width="10" height="8.100" rx="2"/></svg></a><a><svg class="ic" style="left:68.60px;top:7.05px;width:11.4px;height:11.4px;" viewBox="0 0 24 24" fill="none" stroke="#818181" stroke-width="2.0" stroke-linecap="round" stroke-linejoin="round"><path d="M11 3.500H7.500a4 4 0 0 0-4 4v9a4 4 0 0 0 4 4h9a4 4 0 0 0 4-4V13"/><path d="M17.800 3.200a2.100 2.100 0 0 1 3 3L12.500 14.500l-3.800.8.800-3.800z"/></svg></a><a><svg class="ic" style="left:90.10px;top:7.75px;width:10.0px;height:10.0px;" viewBox="0 0 24 24" fill="none" stroke="#818181" stroke-width="2.28" stroke-linecap="round" stroke-linejoin="round"><path d="M6 6l12 12M18 6L6 18"/></svg></a></td><td style="left:106.8px;width:72.0px;height:25.59px"><span class="t" style="left:12.60px;top:7.11px;font-size:8.2px;line-height:11.48px;font-weight:700;color:#15181b;transform:scaleX(1.1443);">09/01/2026</span></td><td style="left:178.8px;width:49.0px;height:25.59px"><span class="t" style="left:12.80px;top:7.11px;font-size:8.2px;line-height:11.48px;font-weight:700;color:#15181b;transform:scaleX(0.9743);">FV</span></td><td style="left:227.8px;width:67.8px;height:25.59px"><span class="t" style="left:11.80px;top:7.11px;font-size:8.2px;line-height:11.48px;font-weight:700;color:#15181b;transform:scaleX(1.0868);">46</span></td><td style="left:295.6px;width:46.6px;height:25.59px"></td><td style="left:342.2px;width:206.0px;height:25.59px"><span class="t" style="left:12.40px;top:7.11px;font-size:8.2px;line-height:11.48px;font-weight:700;color:#15181b;transform:scaleX(0.9461);">PAOLA ANDREA MATEUS RODRIGUEZ Asf Asfas</span></td><td style="left:548.2px;width:73.0px;height:25.59px"><span class="t" style="left:11.60px;top:7.11px;font-size:8.2px;line-height:11.48px;font-weight:700;color:#15181b;transform:scaleX(0.9103);">Efectivo</span></td><td style="left:621.2px;width:48.0px;height:25.59px"><span class="t" style="left:11.80px;top:7.11px;font-size:8.2px;line-height:11.48px;font-weight:700;color:#15181b;transform:scaleX(0.9114);">Activa</span></td><td style="left:669.2px;width:68.8px;height:25.59px"><span class="t" style="left:12.20px;top:7.11px;font-size:8.2px;line-height:11.48px;font-weight:700;color:#15181b;transform:scaleX(0.6043);">No</span></td></tr></tbody></table>
<span class="t" style="left:391.10px;top:321.02px;font-size:7.4px;line-height:10.36px;font-weight:400;color:#4e5256;transform:scaleX(0.9438);">mostrando del 1 al 10 de 55 resultados</span>
<a class="pg" style="left:515.80px;top:316.5px"></a>
<svg class="ic" style="left:521.55px;top:322.55px;width:6.5px;height:6.5px;" viewBox="0 0 24 24" fill="none" stroke="#80858a" stroke-width="2.2" stroke-linecap="round" stroke-linejoin="round"><path d="M15 5l-7 7 7 7"/></svg>
<a class="pg on" style="left:538.49px;top:316.5px"></a>
<span class="t" style="left:545.69px;top:319.48px;font-size:8.6px;line-height:12.04px;font-weight:700;color:#ffffff;transform:scaleX(0.7529);">1</span>
<a class="pg" style="left:561.18px;top:316.5px"></a>
<span class="t" style="left:567.88px;top:319.48px;font-size:8.6px;line-height:12.04px;font-weight:400;color:#22262a;transform:scaleX(0.9621);-webkit-text-stroke:0.120px #22262a;">2</span>
<a class="pg" style="left:583.87px;top:316.5px"></a>
<span class="t" style="left:590.57px;top:319.48px;font-size:8.6px;line-height:12.04px;font-weight:400;color:#22262a;transform:scaleX(0.9621);-webkit-text-stroke:0.120px #22262a;">3</span>
<a class="pg" style="left:606.56px;top:316.5px"></a>
<span class="t" style="left:613.26px;top:319.48px;font-size:8.6px;line-height:12.04px;font-weight:400;color:#22262a;transform:scaleX(0.9621);-webkit-text-stroke:0.120px #22262a;">4</span>
<a class="pg" style="left:629.25px;top:316.5px"></a>
<span class="t" style="left:635.95px;top:319.48px;font-size:8.6px;line-height:12.04px;font-weight:400;color:#22262a;transform:scaleX(0.9621);-webkit-text-stroke:0.120px #22262a;">5</span>
<a class="pg" style="left:651.94px;top:316.5px"></a>
<span class="t" style="left:658.64px;top:319.48px;font-size:8.6px;line-height:12.04px;font-weight:400;color:#22262a;transform:scaleX(0.9621);-webkit-text-stroke:0.120px #22262a;">6</span>
<a class="pg" style="left:674.63px;top:316.5px"></a>
<svg class="ic" style="left:680.38px;top:322.55px;width:6.5px;height:6.5px;" viewBox="0 0 24 24" fill="none" stroke="#80858a" stroke-width="2.2" stroke-linecap="round" stroke-linejoin="round"><path d="M9 5l7 7-7 7"/></svg></section>
<div class="tip" style="left:3.8px;top:60.1px;width:110.2px;height:20.2px"><span class="t" style="left:10.00px;top:4.52px;font-size:8.4px;line-height:11.76px;font-weight:400;color:#2b2f33;transform:scaleX(0.9184);">Enviar Factura Electronica</span><i class="arrow" style="left:52.0px;top:20.0px"></i></div>
<svg class="ic" style="left:59.2px;top:90.0px;width:9.2px;height:12.5px" viewBox="0 0 17 23"><path d="M5.500 1.200c1 0 1.800.8 1.800 1.800v6.300l.5.100V8.300c0-.9.700-1.600 1.600-1.600s1.600.7 1.600 1.600v1.400l.5.100V9.300c0-.8.700-1.500 1.500-1.500s1.500.7 1.500 1.500v1.400l.3.100c.2-.5.700-.9 1.300-.9.800 0 1.400.6 1.400 1.400v4.500c0 3.500-1.600 6-5.600 6H10c-2.300 0-3.700-1-4.800-2.700L1.400 13.500c-.5-.8-.3-1.700.4-2.200.7-.5 1.600-.3 2.100.4l-.2-.3V3c0-1 .8-1.800 1.800-1.800z" fill="#fff" stroke="#111" stroke-width="1.700" stroke-linejoin="round"/></svg>
</main>
<footer>
<span class="t" style="left:13.90px;top:14.30px;font-size:9px;line-height:12.6px;font-weight:400;color:#3b3f44;transform:scaleX(0.9844);">&copy; 2026</span><a class="t" style="left:46.00px;top:14.44px;font-size:8.8px;line-height:12.32px;font-weight:400;color:#1ea7ad;transform:scaleX(0.9213);-webkit-text-stroke:0.350px #1ea7ad;">LinkSoft Technologies</a>
</footer>
<div class="status"><span class="t" style="left:2.60px;top:0.81px;font-size:7.55px;line-height:10.57px;font-weight:400;color:#ffffff;transform:scaleX(0.9954);">127.0.0.1:8000/es/sales/3119/send</span></div>
</body></html>
